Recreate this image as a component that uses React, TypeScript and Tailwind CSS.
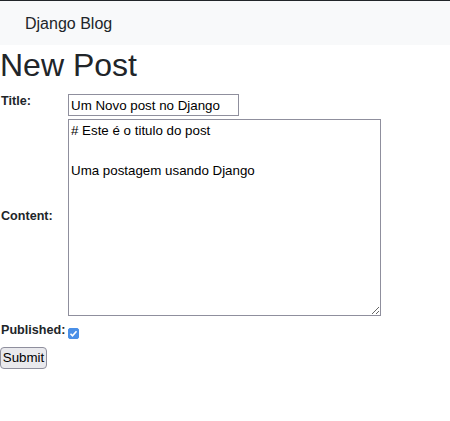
import { useState } from 'react';

const content = `# Este é o titulo do post

Uma postagem usando Django`;

const App = () => {
    const [title, setTitle] = useState('Um Novo post no Django')
    const [body, setBody] = useState(content)
    const [published, setPublished] = useState(true)

    return (
        <div className="min-h-[421px] bg-white border-t border-[#212529] font-['Liberation_Sans',Arial,sans-serif] text-[#212529]">
            <nav className="h-[44px] bg-[#f8f9fa] flex items-center px-[25px] pt-[2px]">
                <span className="text-[16px] leading-[20px]">Django Blog</span>
            </nav>
            <h1 className="text-[32px] leading-[40px] m-0">New Post</h1>
            <form onSubmit={(e) => e.preventDefault()}>
                <div className="flex mt-[7px]">
                    <label className="w-[68px] pl-[1px] pt-[1px] text-[12.6px] font-bold leading-[16px]">Title:</label>
                    <input
                        value={title}
                        onChange={(e) => setTitle(e.target.value)}
                        className="mt-[2px] w-[171px] h-[22px] border border-[#8f8f9d] px-[2px] text-[13.33px] leading-[18px] text-black outline-none"
                    />
                </div>
                <div className="flex items-center mt-[3px]">
                    <label className="w-[68px] pl-[1px] pb-[4px] text-[12.6px] font-bold leading-[16px]">Content:</label>
                    <textarea
                        value={body}
                        onChange={(e) => setBody(e.target.value)}
                        className="w-[313px] h-[197px] border border-[#8f8f9d] px-[2px] pt-[1px] text-[13.33px] leading-[20px] text-black outline-none"
                    />
                </div>
                <div className="flex mt-[6px]">
                    <label className="w-[68px] pl-[1px] text-[12.6px] font-bold leading-[16px]">Published:</label>
                    <span className="relative mt-[6px] w-[11px] h-[11px]">
                        <input
                            type="checkbox"
                            checked={published}
                            onChange={(e) => setPublished(e.target.checked)}
                            className="appearance-none block w-[11px] h-[11px] rounded-[2px] bg-white border border-[#8f8f9d] checked:bg-[#4a8fe7] checked:border-[#4a8fe7]"
                        />
                        {published && (
                            <svg className="absolute left-0 top-0 pointer-events-none" width="11" height="11" viewBox="0 0 11 11">
                                <path d="M2.5 5.8 L4.5 7.8 L8.5 3.3" fill="none" stroke="white" strokeWidth="1.6" />
                            </svg>
                        )}
                    </span>
                </div>
                <button
                    type="submit"
                    className="block mt-[8px] w-[47px] h-[22px] border border-[#8f8f9d] rounded-[4px] bg-[#e9e9ed] text-[13.33px] leading-[18px] text-black"
                >
                    Submit
                </button>
            </form>
        </div>
    )
}

export default App;
